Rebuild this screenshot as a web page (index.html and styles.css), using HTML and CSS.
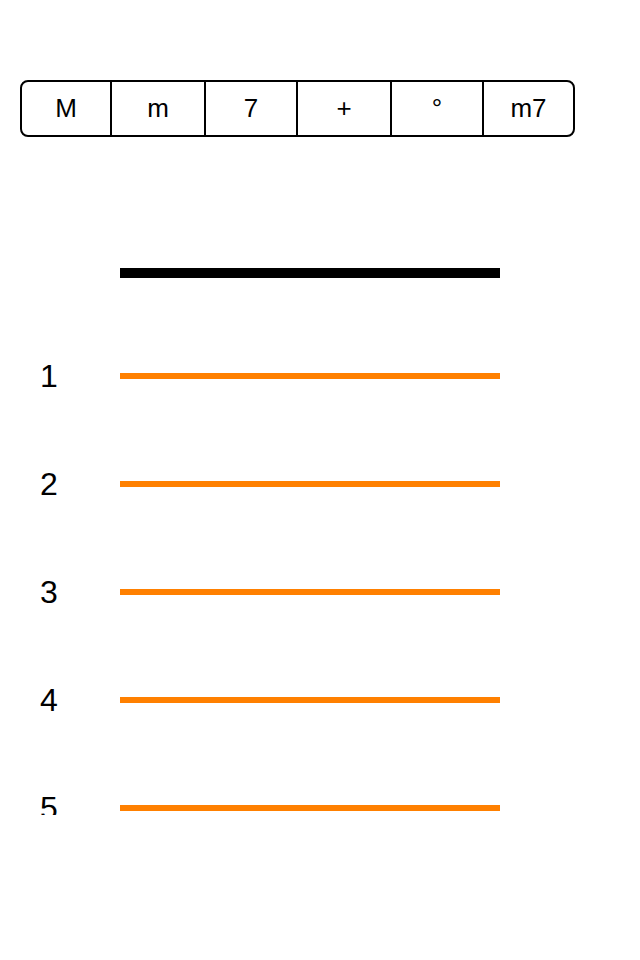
FILE: index.html
```html
<!DOCTYPE html>
<html lang="en">
<head>
    <meta charset="UTF-8">
    <meta name="viewport" content="width=device-width, initial-scale=1.0">
    <title>Chord Strings</title>
    <link rel="stylesheet" href="styles.css">
</head>
<body>
    <!-- Chord type selector -->
    <div class="segments">
        <div class="segment">M</div>
        <div class="segment">m</div>
        <div class="segment">7</div>
        <div class="segment">+</div>
        <div class="segment">°</div>
        <div class="segment">m7</div>
    </div>

    <!-- Nut -->
    <div class="nut"></div>

    <!-- Frets -->
    <div class="fret-list">
        <div class="fret"><span class="fret-num">1</span><span class="fret-line"></span></div>
        <div class="fret"><span class="fret-num">2</span><span class="fret-line"></span></div>
        <div class="fret"><span class="fret-num">3</span><span class="fret-line"></span></div>
        <div class="fret"><span class="fret-num">4</span><span class="fret-line"></span></div>
        <div class="fret"><span class="fret-num">5</span><span class="fret-line"></span></div>
    </div>
</body>
</html>
```

FILE: styles.css
```css
/* Body style */
body {
    font-family: "Liberation Sans", Arial, sans-serif;
    background-color: #fff;
    color: #000;
    margin: 0;
    padding: 0;
}

/* Segmented control */
.segments {
    display: grid;
    grid-template-columns: 88px 94px 92px 94px 92px 1fr;
    width: 555px;
    height: 57px;
    margin: 80px 0 0 20px;
    border: 2px solid #000;
    border-radius: 8px;
    box-sizing: border-box;
}

.segment {
    display: flex;
    align-items: center;
    justify-content: center;
    font-size: 26px;
}

.segment + .segment {
    border-left: 2px solid #000;
}

/* Nut bar */
.nut {
    width: 380px;
    height: 10px;
    margin: 131px 0 0 120px;
    background-color: #000;
}

/* Fret list */
.fret-list {
    height: 493px;
    margin-top: 44px;
    overflow: hidden;
}

.fret {
    display: flex;
    align-items: center;
    height: 108px;
}

.fret-num {
    width: 80px;
    padding-left: 40px;
    font-size: 32px;
    line-height: 32px;
}

.fret-line {
    width: 380px;
    height: 6px;
    background-color: #ff8000;
}
```
